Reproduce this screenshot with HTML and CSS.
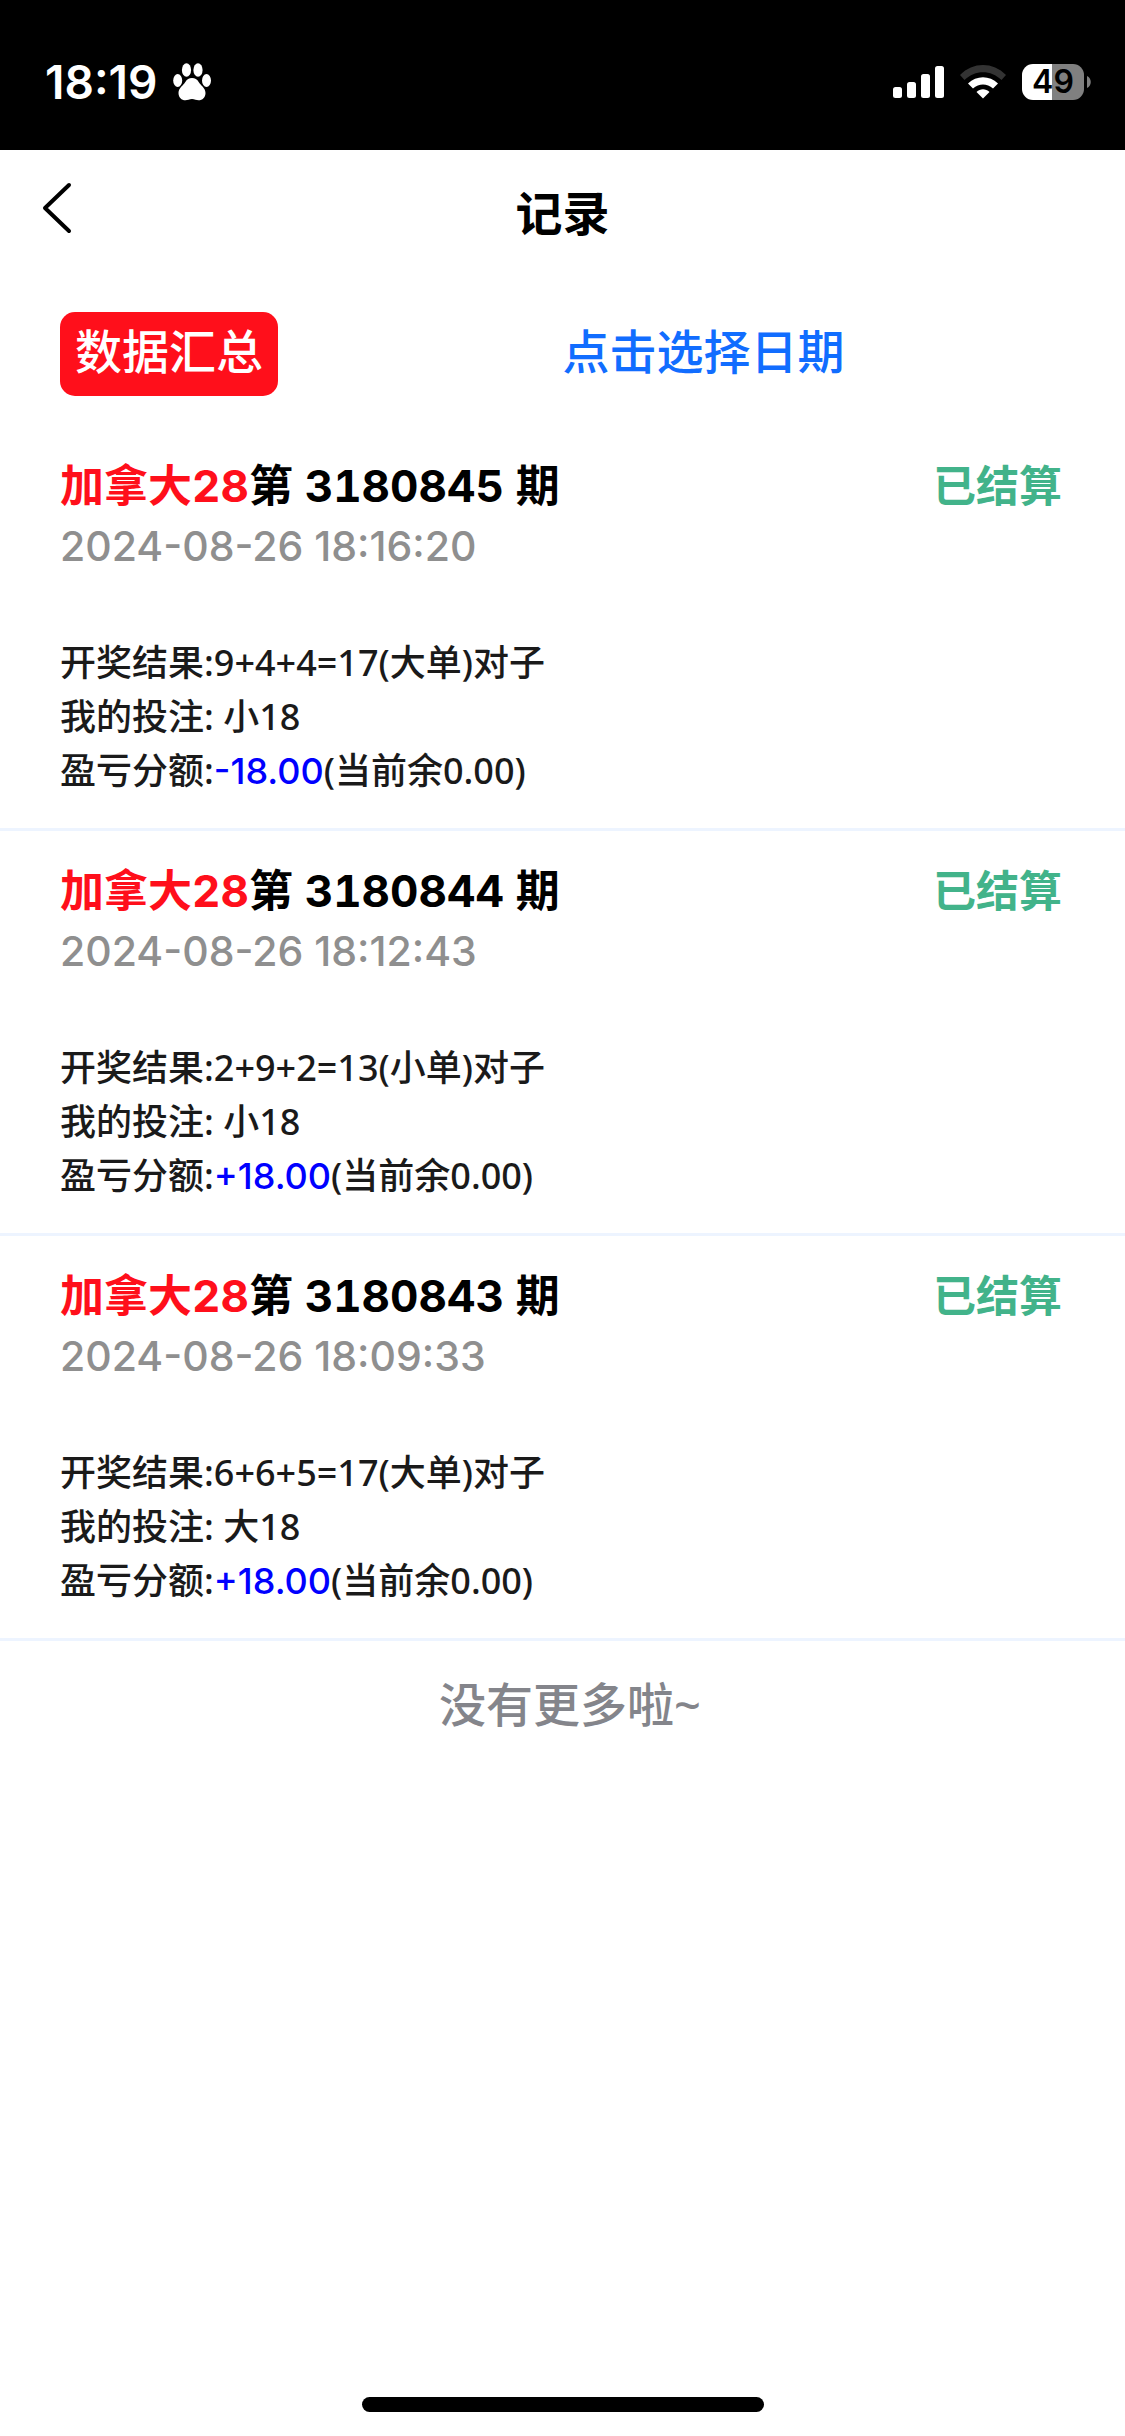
FILE: index.html
```html
<!DOCTYPE html>
<html lang="zh-CN">
<head>
<meta charset="utf-8">
<meta name="viewport" content="width=device-width, initial-scale=1">
<title>记录</title>
<link rel="stylesheet" href="styles.css">
</head>
<body>
<div class="screen">
  <div class="status-bar">
    <div class="status-left">
      <span class="time">18:19</span>
      <svg class="paw" width="38" height="38" viewBox="0 0 38 38" fill="#fff" aria-hidden="true">
        <ellipse cx="13.500" cy="7" rx="4.600" ry="6.700"/>
        <ellipse cx="25" cy="7" rx="4.600" ry="6.700"/>
        <ellipse cx="4.700" cy="17.500" rx="4.500" ry="6.500"/>
        <ellipse cx="33.500" cy="17.500" rx="4.500" ry="6.500"/>
        <path d="M19 15c3 0 5 1 7 4.500 1.500 2.600 6.500 5.500 6.500 10.500 0 4.500-3 7.300-7 7.300-2 0-4-1.300-6.500-1.300s-4.500 1.300-6.500 1.300c-4 0-7-2.800-7-7.300 0-5 5-7.900 6.500-10.500C14 16 16 15 19 15z"/>
      </svg>
    </div>
    <div class="status-right">
      <svg width="51" height="32" viewBox="0 0 51 32" fill="#fff" aria-hidden="true">
        <rect x="0" y="21" width="9" height="11" rx="2.500"/>
        <rect x="14" y="16" width="9" height="16" rx="2.500"/>
        <rect x="28" y="8" width="9" height="24" rx="2.500"/>
        <rect x="42" y="0" width="9" height="32" rx="2.500"/>
      </svg>
      <svg width="46" height="34" viewBox="0 0 46 34" aria-hidden="true">
        <path d="M0 10C13-3.300 33-3.300 46 10l-4.500 5C31 4.500 15 4.500 4.500 15z" fill="#333"/>
        <path d="M8 18.500c8.500-8.500 21.500-8.500 30 0l-5 5c-6-5.500-14-5.500-20 0z" fill="#fff"/>
        <path d="M16.500 27c3.800-3.600 9.200-3.600 13 0L23 33.500z" fill="#fff"/>
      </svg>
      <div class="battery">
        <span class="battery-level">49</span>
        <svg width="4" height="12" viewBox="0 0 4 12" fill="#808080" aria-hidden="true"><path d="M0 0c5 2 5 10 0 12z"/></svg>
      </div>
    </div>
  </div>

  <header class="nav">
    <button class="back" type="button" aria-label="返回">
      <svg width="30" height="52" viewBox="0 0 30 52" fill="none" stroke="#000" stroke-width="4" stroke-linecap="round" stroke-linejoin="round" aria-hidden="true"><path d="M27 3 3 26l24 23"/></svg>
    </button>
    <h1 class="nav-title">记录</h1>
  </header>

  <main class="content">
    <div class="toolbar">
      <div class="tool"><button class="summary" type="button">数据汇总</button></div>
      <div class="tool"><button class="date-picker" type="button">点击选择日期</button></div>
    </div>

    <article class="record">
      <div class="record-head">
        <h2 class="record-title"><span class="game">加拿大28</span>第 3180845 期</h2>
        <span class="state">已结算</span>
      </div>
      <time class="record-time">2024-08-26 18:16:20</time>
      <div class="record-body">
        <p>开奖结果:9+4+4=17(大单)对子</p>
        <p>我的投注: 小18</p>
        <p>盈亏分额:<span class="amount">-18.00</span>(当前余0.00)</p>
      </div>
    </article>

    <article class="record">
      <div class="record-head">
        <h2 class="record-title"><span class="game">加拿大28</span>第 3180844 期</h2>
        <span class="state">已结算</span>
      </div>
      <time class="record-time">2024-08-26 18:12:43</time>
      <div class="record-body">
        <p>开奖结果:2+9+2=13(小单)对子</p>
        <p>我的投注: 小18</p>
        <p>盈亏分额:<span class="amount">+18.00</span>(当前余0.00)</p>
      </div>
    </article>

    <article class="record">
      <div class="record-head">
        <h2 class="record-title"><span class="game">加拿大28</span>第 3180843 期</h2>
        <span class="state">已结算</span>
      </div>
      <time class="record-time">2024-08-26 18:09:33</time>
      <div class="record-body">
        <p>开奖结果:6+6+5=17(大单)对子</p>
        <p>我的投注: 大18</p>
        <p>盈亏分额:<span class="amount">+18.00</span>(当前余0.00)</p>
      </div>
    </article>

    <p class="end">没有更多啦~</p>
  </main>

  <div class="home-indicator"></div>
</div>
</body>
</html>
```
FILE: styles.css
```css
* {
  box-sizing: border-box;
}

body {
  margin: 0;
  background: #fff;
  color: #1a1a1a;
  font-family: "Noto Sans", "Noto Sans CJK SC", sans-serif;
  font-weight: 500;
}

h1, h2, p {
  margin: 0;
}

button {
  border: 0;
  padding: 0;
  background: none;
  font: inherit;
}

svg {
  display: block;
}

.screen {
  min-height: 100vh;
  display: flex;
  flex-direction: column;
}

.status-bar {
  display: flex;
  justify-content: space-between;
  align-items: center;
  height: 150px;
  padding: 14px 34px 0 45px;
  background: #000;
}

.status-left,
.status-right {
  display: flex;
  align-items: center;
  gap: 16px;
}

.time {
  color: #fff;
  font: 600 46px/56px "Inter", sans-serif;
}

.battery {
  display: flex;
  align-items: center;
  gap: 3px;
}

.battery-level {
  width: 62px;
  border-radius: 11px;
  background: linear-gradient(90deg, #fff 30px, #808080 30px);
  color: #000;
  font: 600 32px/36px "Inter", sans-serif;
  text-align: center;
}

.nav {
  display: grid;
  grid-template-columns: 1fr auto 1fr;
  align-items: center;
  height: 132px;
  padding: 0 42px;
}

.back {
  justify-self: start;
  padding-bottom: 16px;
}

.nav-title {
  padding-bottom: 6px;
  color: #000;
  font-size: 47px;
  font-weight: 700;
  line-height: 60px;
}

.toolbar {
  display: grid;
  grid-template-columns: 1fr 1fr;
  padding: 30px 0;
}

.tool:first-child {
  padding-left: 60px;
}

.summary,
.date-picker {
  display: block;
  padding-bottom: 6px;
  font-size: 47px;
  line-height: 78px;
}

.summary {
  padding-left: 15px;
  padding-right: 15px;
  border-radius: 15px;
  background: #ff0f1b;
  color: #fff;
}

.date-picker {
  color: #116dff;
}

.record {
  padding: 30px 60px;
  border-bottom: 3px solid #edf4ff;
}

.record-head {
  display: flex;
  justify-content: space-between;
  line-height: 60px;
}

.record-title {
  color: #000;
  font-family: "Inter", "Noto Sans CJK SC", sans-serif;
  font-size: 44px;
  font-weight: 700;
  font-variant-numeric: tabular-nums;
  line-height: 60px;
}

.game {
  color: #ff0f1b;
}

.state {
  padding-right: 3px;
  color: #42b38a;
  font-size: 43px;
  font-weight: 700;
}

.record-time {
  display: block;
  color: #8f8f8f;
  font-family: "Inter", sans-serif;
  font-size: 41px;
  line-height: 60px;
}

.record-body {
  padding-top: 60px;
  font-size: 36px;
  line-height: 54px;
}

.amount {
  color: #00f;
  font-family: "Inter", sans-serif;
}

.end {
  padding: 27px 0 30px 15px;
  color: #84858b;
  font-size: 47px;
  line-height: 72px;
  text-align: center;
}

.home-indicator {
  width: 402px;
  height: 15px;
  margin: auto auto 24px;
  border-radius: 8px;
  background: #000;
}
```
